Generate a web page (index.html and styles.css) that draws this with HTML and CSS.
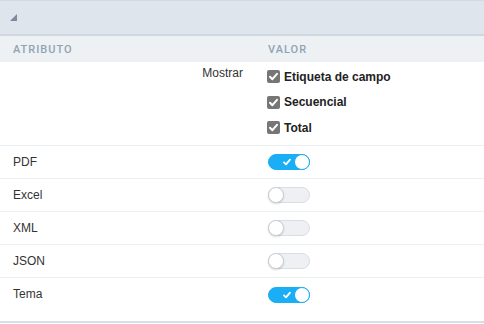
FILE: index.html
```html
<!DOCTYPE html>
<html>
<head>
<meta charset="utf-8">
<link rel="stylesheet" href="styles.css">
</head>
<body>
<div class="panel">
  <div class="topbar"><span class="tri"></span></div>
  <div class="row thead">
    <div class="cell">Atributo</div>
    <div class="cell">Valor</div>
  </div>
  <div class="row show">
    <div class="cell label-right">Mostrar</div>
    <div class="cell checks">
      <label class="chk"><span class="box"><svg viewBox="0 0 13 13" width="13" height="13"><path d="M3 6.8 L5.4 9.2 L10 3.8" fill="none" stroke="#fff" stroke-width="2" stroke-linecap="round" stroke-linejoin="round"/></svg></span>Etiqueta de campo</label>
      <label class="chk"><span class="box"><svg viewBox="0 0 13 13" width="13" height="13"><path d="M3 6.8 L5.4 9.2 L10 3.8" fill="none" stroke="#fff" stroke-width="2" stroke-linecap="round" stroke-linejoin="round"/></svg></span>Secuencial</label>
      <label class="chk"><span class="box"><svg viewBox="0 0 13 13" width="13" height="13"><path d="M3 6.8 L5.4 9.2 L10 3.8" fill="none" stroke="#fff" stroke-width="2" stroke-linecap="round" stroke-linejoin="round"/></svg></span>Total</label>
    </div>
  </div>
  <div class="row item">
    <div class="cell">PDF</div>
    <div class="cell"><span class="toggle on"><svg class="tick" viewBox="0 0 10 10" width="10" height="10"><path d="M2 5.4 L4 7.4 L8 2.6" fill="none" stroke="#fff" stroke-width="1.8" stroke-linecap="round" stroke-linejoin="round"/></svg><span class="knob"></span></span></div>
  </div>
  <div class="row item">
    <div class="cell">Excel</div>
    <div class="cell"><span class="toggle"><span class="knob"></span></span></div>
  </div>
  <div class="row item">
    <div class="cell">XML</div>
    <div class="cell"><span class="toggle"><span class="knob"></span></span></div>
  </div>
  <div class="row item">
    <div class="cell">JSON</div>
    <div class="cell"><span class="toggle"><span class="knob"></span></span></div>
  </div>
  <div class="row item last">
    <div class="cell">Tema</div>
    <div class="cell"><span class="toggle on"><svg class="tick" viewBox="0 0 10 10" width="10" height="10"><path d="M2 5.4 L4 7.4 L8 2.6" fill="none" stroke="#fff" stroke-width="1.8" stroke-linecap="round" stroke-linejoin="round"/></svg><span class="knob"></span></span></div>
  </div>
</div>
</body>
</html>
```
FILE: styles.css
```css
html, body {
  margin: 0;
  padding: 0;
  background: #fff;
}
body {
  font-family: "Liberation Sans", Arial, sans-serif;
  font-size: 12px;
  color: #333;
}
.panel {
  width: 484px;
  border-bottom: 2px solid #d8e0e7;
  padding-bottom: 10px;
}
.topbar {
  height: 33px;
  border-top: 1px solid #d3dbe2;
  border-bottom: 2px solid #cfd8df;
  background: #dfe5ec;
  position: relative;
}
.tri {
  position: absolute;
  left: 10px;
  top: 13px;
  width: 0;
  height: 0;
  border-left: 7px solid transparent;
  border-bottom: 7px solid #7d8a99;
}
.row {
  display: grid;
  grid-template-columns: 255px 1fr;
}
.cell {
  padding-left: 13px;
}
.thead {
  height: 26px;
  background: #edf1f4;
  align-items: center;
  font-family: Roboto, "Liberation Sans", sans-serif;
  font-weight: 500;
  font-size: 11px;
  letter-spacing: 1px;
  text-transform: uppercase;
  color: #8fa3b5;
}
.show {
  border-bottom: 1px solid #eceff2;
  padding: 2px 0 4px;
}
.label-right {
  text-align: right;
  padding-right: 12px;
  padding-left: 0;
  line-height: 14px;
  padding-top: 2px;
}
.checks {
  display: flex;
  flex-direction: column;
}
.chk {
  display: flex;
  align-items: center;
  height: 25.5px;
  font-weight: bold;
  color: #222;
  padding-left: 0;
}
.box {
  width: 13px;
  height: 13px;
  border-radius: 2px;
  background: #767676;
  margin: 0 4px 0 -1px;
  display: flex;
}
.item {
  height: 32px;
  border-bottom: 1px solid #eceff2;
  align-items: center;
}
.item.last {
  border-bottom: none;
  height: 33px;
}
.toggle {
  display: block;
  position: relative;
  width: 40px;
  height: 14px;
  border-radius: 9px;
  background: #eef0f3;
  border: 1px solid #d9dee3;
  margin-top: 1px;
}
.toggle.on {
  background: #1aaef5;
  border-color: #1aaef5;
}
.knob {
  position: absolute;
  top: -1px;
  left: -1px;
  width: 14px;
  height: 14px;
  border-radius: 50%;
  background: #fff;
  border: 1px solid #c9cfd5;
  box-shadow: 0 1px 2px rgba(0,0,0,0.15);
}
.toggle.on .knob {
  left: auto;
  right: -1px;
  border-color: #1aaef5;
  box-shadow: none;
}
.tick {
  position: absolute;
  left: 13px;
  top: 2px;
}
```
